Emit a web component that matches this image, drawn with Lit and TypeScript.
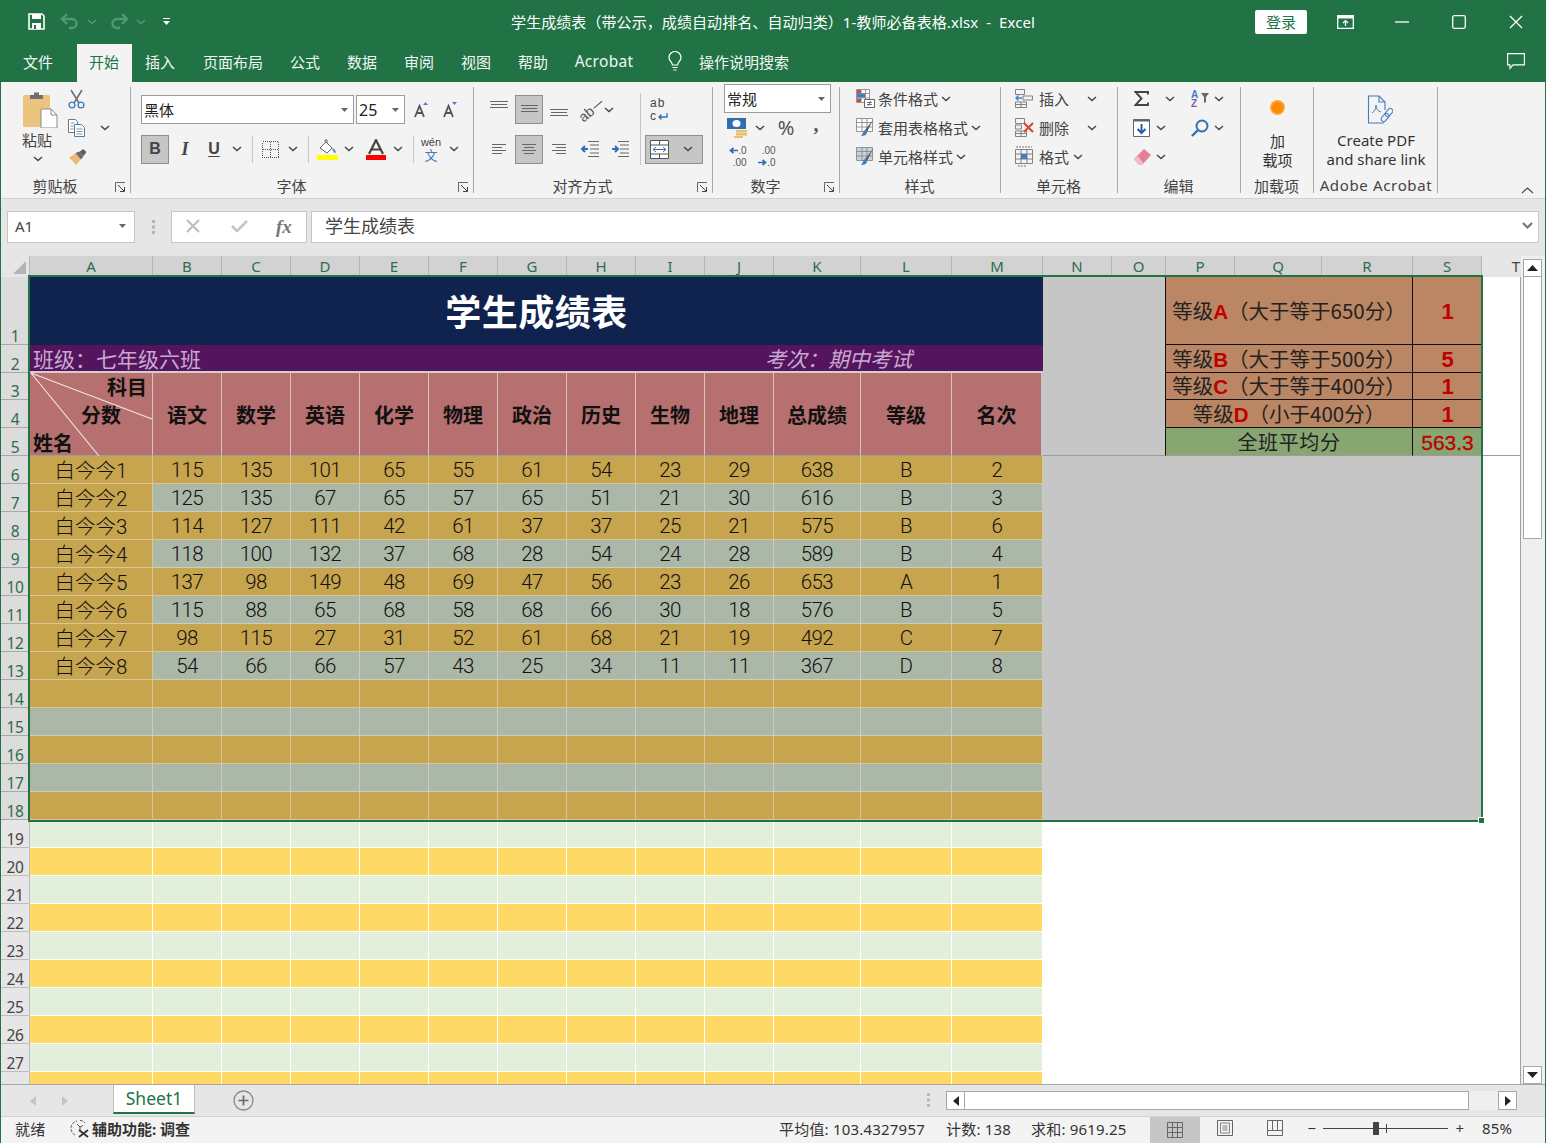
import { LitElement, html, css } from 'lit';
import { customElement } from 'lit/decorators.js';

type Item = [number, unknown, string?];

// every item is centred on its x (or starts at it, with 'l'), x counted from the window's left edge
const row = (x0: number, items: Item[], cls = '') => {
  let prev = x0;
  return html`<div class="row ${cls}">
    ${items.map(([x, t, c]) => {
      const m = x - prev;
      prev = x;
      return html`<span class="it ${c ?? ''}" style="margin-left:${m}px">${t}</span>`;
    })}
  </div>`;
};

const chev = (c = '#444') =>
  html`<svg width="10" height="6" viewBox="0 0 10 6"><path d="M1 1l4 3.6L9 1" fill="none" stroke="${c}" stroke-width="1.4" /></svg>`;
const caret = html`<svg width="7" height="4" viewBox="0 0 7 4"><path d="M0 0h7L3.500 4z" fill="#666" /></svg>`;
const launcher = html`<svg class="launch" width="11" height="11" viewBox="0 0 11 11"><path d="M.5 10V.5H10" fill="none" stroke="#666" /><path d="M3 3l6 6M9.5 5v4.500H5" fill="none" stroke="#444" /></svg>`;

const icons = {
  save: html`<svg width="17" height="17" viewBox="0 0 17 17"><path d="M1 1h13l2 2v13H1z" fill="none" stroke="#fff" stroke-width="1.6" /><path d="M4 1h9v5H4z" fill="#fff" /><path d="M4 10h9v6H4z" fill="#fff" /><path d="M6 12h2v4H6z" fill="#217346" /></svg>`,
  undo: html`<svg width="20" height="17" viewBox="0 0 20 17"><path d="M7 1L2 6l5 5M2 6h10a4.500 4.500 0 0 1 0 9H9" fill="none" stroke="#4f9a72" stroke-width="2.400" /></svg>`,
  redo: html`<svg width="20" height="17" viewBox="0 0 20 17"><path d="M13 1l5 5-5 5M18 6H8a4.500 4.500 0 0 0 0 9h3" fill="none" stroke="#4f9a72" stroke-width="2.400" /></svg>`,
  custom: html`<svg width="7" height="8" viewBox="0 0 7 8"><path d="M0 .5h7" stroke="#fff" /><path d="M0 3h7L3.500 7z" fill="#fff" /></svg>`,
  ribbonMode: html`<svg width="17" height="14" viewBox="0 0 17 14"><path d="M.7.7h15.600v12.600H.7z" fill="none" stroke="#fff" stroke-width="1.300" /><path d="M.7 1h15.600v2.500H.7z" fill="#fff" /><path d="M8.500 11V6M6 8l2.500-2.500L11 8" fill="none" stroke="#fff" stroke-width="1.200" /></svg>`,
  min: html`<svg width="14" height="2" viewBox="0 0 14 2"><path d="M0 1h14" stroke="#fff" stroke-width="1.300" /></svg>`,
  max: html`<svg width="14" height="14" viewBox="0 0 14 14"><rect x=".7" y=".7" width="12.600" height="12.600" rx="1.500" fill="none" stroke="#fff" stroke-width="1.300" /></svg>`,
  close: html`<svg width="14" height="14" viewBox="0 0 14 14"><path d="M1 1l12 12M13 1L1 13" stroke="#fff" stroke-width="1.300" /></svg>`,
  bulb: html`<svg width="14" height="21" viewBox="0 0 14 21"><path d="M4.500 14c0-3-3.500-4-3.500-7.500a6 6 0 0 1 12 0C13 10 9.500 11 9.500 14z" fill="none" stroke="#fff" stroke-width="1.200" /><path d="M4.500 16.500h5M5.500 19h3" stroke="#fff" stroke-width="1.200" /></svg>`,
  comment: html`<svg width="18" height="17" viewBox="0 0 18 17"><path d="M.6.6h16.800v11.300H6l-3 3.500v-3.500H.6z" fill="none" stroke="#fff" stroke-width="1.100" /></svg>`,
  paste: html`<svg width="37" height="37" viewBox="0 0 37 37"><rect x="2" y="4" width="27" height="32" rx="1.500" fill="#edc47e" /><path d="M9 4h4V1.500h5V4h4v4H9z" fill="#6f6f6f" /><path d="M20 18h10l6 6v13H20z" fill="#fff" stroke="#8c8c8c" /><path d="M30 18v6h6" fill="none" stroke="#8c8c8c" /></svg>`,
  cut: html`<svg width="17" height="20" viewBox="0 0 17 20"><path d="M3 1l8 13M14 1L6 14" stroke="#6d6d6d" stroke-width="1.500" /><circle cx="4" cy="16" r="2.900" fill="none" stroke="#3f7cc0" stroke-width="1.400" /><circle cx="13" cy="16" r="2.900" fill="none" stroke="#3f7cc0" stroke-width="1.400" /></svg>`,
  copy: html`<svg width="17" height="18" viewBox="0 0 17 18"><path d="M.5.500h7l2 2v11H.5z" fill="#fff" stroke="#777" /><path d="M6.500 5.500h7l3 3v9h-10z" fill="#fff" stroke="#4a7ebb" /><path d="M2.500 4h4M2.500 7h3M2.500 10h3M8.500 10h6M8.500 12.500h6M8.500 15h6" stroke="#777" stroke-width=".8" /></svg>`,
  brush: html`<svg width="18" height="16" viewBox="0 0 18 16"><path d="M0 9l7-5 5 6-5 6C5 13 3 11 0 9z" fill="#e9b872" /><path d="M6.500 4l5.500 6.500 2.500-3-4-5z" fill="#6a6a6a" /><path d="M10.500 3L14 0l3.500 3-3 4z" fill="#5c5c5c" /></svg>`,
  fontUp: html`<svg width="15" height="16" viewBox="0 0 15 16"><path d="M1 15L5.500 4 10 15M2.700 11h5.600" fill="none" stroke="#555" stroke-width="1.800" /><path d="M9 3l2.500-3L14 3z" fill="#4a7ebb" /></svg>`,
  fontDown: html`<svg width="15" height="16" viewBox="0 0 15 16"><path d="M1 15L5.500 4 10 15M2.700 11h5.600" fill="none" stroke="#555" stroke-width="1.800" /><path d="M9 0h5l-2.500 3z" fill="#4a7ebb" /></svg>`,
  border: html`<svg width="17" height="17" viewBox="0 0 17 17" shape-rendering="crispEdges"><path d="M.5.500h16v16H.5zM8.500.500v16M.5 8.500h16" fill="none" stroke="#555" stroke-dasharray="1 1" /></svg>`,
  fill: html`<svg width="21" height="21" viewBox="0 0 21 21"><path d="M3 9l6-6 6 6-5 5z" fill="#fff" stroke="#666" /><path d="M8 3V1h2v3" fill="none" stroke="#666" /><path d="M15 9c3 1 4 3 3.500 5-1.500 0-2.500-2-3.500-5z" fill="#4a7ebb" /><path d="M0 16h21v5H0z" fill="#ffff00" /></svg>`,
  color: html`<svg width="20" height="21" viewBox="0 0 20 21"><path d="M3 15L10 1l7 14M5.500 10.500h9" fill="none" stroke="#444" stroke-width="2.200" /><path d="M0 16h20v5H0z" fill="#ff0000" /></svg>`,
  brushCell: (c: string) => html`<svg width="19" height="19" viewBox="0 0 19 19"><path d="M.5.500h16v13H.5zM.5 4.500h16M.5 9h16M6 .5v13M11 .5v13" fill="${c}" stroke="#8a8a8a" stroke-width=".9" /><path d="M17 2L9 12l2 2z" fill="#5c5c5c" /><path d="M9 12c-2 1-1.500 3-4 6 3 0 6-1 6-4z" fill="#3f7cc0" /></svg>`,
  cond: html`<svg width="19" height="19" viewBox="0 0 19 19"><path d="M.5.500h13v13H.5zM.5 4.500h13M.5 9h13M5 .5v13M9.500.5v13" fill="#fff" stroke="#8a8a8a" stroke-width=".9" /><path d="M1 1h4v3.500H1z" fill="#c0504d" /><path d="M1 5h8v3.500H1z" fill="#3f7cc0" /><path d="M1 9.500h4V13H1z" fill="#c0504d" /><path d="M8.500 10.500h10v8h-10z" fill="#fff" stroke="#666" /><path d="M11 13.500h5M11 15.500h5M14.500 12l-2 5" stroke="#555" stroke-width=".8" /></svg>`,
  insert: html`<svg width="18" height="19" viewBox="0 0 18 19"><path d="M.5.500h9v5h-9zM.5 13h11v5.500H.5zM6 13v5.500M.5 15.500h11M8 7h9.500v4H8z" fill="none" stroke="#777" stroke-width=".9" /><path d="M7 9H1M3.500 6.500L1 9l2.500 2.500" fill="none" stroke="#3f7cc0" stroke-width="1.300" /></svg>`,
  del: html`<svg width="20" height="19" viewBox="0 0 20 19"><path d="M.5.500h9v5h-9zM.5 13h11v5.500H.5zM6 13v5.500M.5 15.500h11M.5 7h6v4h-6z" fill="none" stroke="#777" stroke-width=".9" /><path d="M9 5l9 9M18 5l-9 9" stroke="#d9432f" stroke-width="2" /></svg>`,
  format: html`<svg width="18" height="21" viewBox="0 0 18 21"><path d="M.5 3.500h17v14H.5zM.5 8h17M.5 13h17M6 3.500v14M12 3.500v14" fill="none" stroke="#777" stroke-width=".9" /><path d="M6 8h6v5H6z" fill="#3f7cc0" /><path d="M1 1h16M3 20h8" stroke="#777" stroke-dasharray="2 1" /></svg>`,
  sigma: html`<svg width="15" height="15" viewBox="0 0 15 15"><path d="M14 3.500V1H1.500l6 6.500-6 6.500H14v-2.500" fill="none" stroke="#444" stroke-width="1.900" /></svg>`,
  sort: html`<svg width="19" height="17" viewBox="0 0 19 17"><text x="0" y="7.500" class="sa">A</text><text x="0" y="16.500" class="sz">Z</text><path d="M10 3h8l-3 4v5l-2 1V7z" fill="#666" /></svg>`,
  down: html`<svg width="17" height="18" viewBox="0 0 17 18"><path d="M.5.500h16v17H.5z" fill="#fff" stroke="#666" /><path d="M.5.500h16v2H.5z" fill="#666" /><path d="M8.500 5v9M4.500 10l4 4 4-4" fill="none" stroke="#1f62a8" stroke-width="2" /></svg>`,
  find: html`<svg width="18" height="18" viewBox="0 0 18 18"><circle cx="11" cy="7" r="5.500" fill="none" stroke="#2f6fb0" stroke-width="1.900" /><path d="M7 11l-6 6" stroke="#2f6fb0" stroke-width="2.400" /></svg>`,
  erase: html`<svg width="17" height="17" viewBox="0 0 17 17"><path d="M0 11L10 1l7 6-9 10H5z" fill="#e47f95" /><path d="M0 11l5 6h3l1.500-1.500L4 8z" fill="#f2bcc8" /></svg>`,
  pdf: html`<svg width="26" height="30" viewBox="0 0 26 30"><path d="M17 28H1.500V1H12l6 6v8" fill="none" stroke="#3f7cc0" stroke-width="1.100" /><path d="M12 1v6h6" fill="none" stroke="#3f7cc0" stroke-width="1.100" /><path d="M5 18c3-2 4-5 4-8 0 4 2 6 5 7" fill="none" stroke="#3f7cc0" /><rect x="13.500" y="20" width="9" height="5" rx="2.500" transform="rotate(-50 18 22.500)" fill="none" stroke="#3f7cc0" /><rect x="17.500" y="15" width="9" height="5" rx="2.500" transform="rotate(-50 22 17.500)" fill="none" stroke="#3f7cc0" /></svg>`,
  alignV: (top: number, w = 17) => html`<svg width="${w}" height="17" viewBox="0 0 ${w} 17"><path d="M0 ${top}.5h${w}M1 ${top + 3}.5h${w - 2}M0 ${top + 6}.5h${w}" stroke="#666" /></svg>`,
  alignH: (k: 'l' | 'c' | 'r') => {
    const d = { l: 'M0 2.500h14M0 5.500h10M0 8.500h14M0 11.500h10', c: 'M0 2.500h14M2 5.500h10M0 8.500h14M2 11.500h10', r: 'M0 2.500h14M4 5.500h10M0 8.500h14M4 11.500h10' }[k];
    return html`<svg width="14" height="14" viewBox="0 0 14 14"><path d="${d}" stroke="#666" /></svg>`;
  },
  outdent: html`<svg width="18" height="16" viewBox="0 0 18 16"><path d="M7 .5h11M9 4h9M9 8h9M9 12h9M7 15.500h11" stroke="#666" /><path d="M7 8H1M4 5L1 8l3 3" fill="none" stroke="#2f6fb0" stroke-width="2" /></svg>`,
  indent: html`<svg width="18" height="16" viewBox="0 0 18 16"><path d="M7 .5h11M9 4h9M9 8h9M9 12h9M7 15.500h11" stroke="#666" /><path d="M1 8h6M4 5l3 3-3 3" fill="none" stroke="#2f6fb0" stroke-width="2" /></svg>`,
  merge: html`<svg width="19" height="19" viewBox="0 0 19 19"><path d="M.5.500h18v18H.5zM.5 5h18M.5 14h18M9.500.5V5M9.500 14v4.500" fill="#fff" stroke="#555" /><path d="M3 9.500h13M6 7L3 9.500 6 12M13 7l3 2.500L13 12" fill="none" stroke="#2f6fb0" /></svg>`,
  currency: html`<svg width="21" height="20" viewBox="0 0 21 20"><path d="M0 0h19v11H0z" fill="#2f6fb0" /><ellipse cx="9.500" cy="5.500" rx="4" ry="3.500" fill="#fff" /><path d="M9 12h11v2.500H9zM9 15h11v2.500H9zM7 18h9v2H7z" fill="#eebd6a" /></svg>`,
  incDec: (inc: boolean) => inc
    ? html`<span class="dec"><span class="dr"><svg width="9" height="7" viewBox="0 0 9 7"><path d="M9 3.500H2M4.500 1L1.500 3.500l3 2.500" fill="none" stroke="#2f6fb0" stroke-width="1.700" /></svg>.0</span><span>.00</span></span>`
    : html`<span class="dec"><span>.00</span><span class="dr"><svg width="9" height="7" viewBox="0 0 9 7"><path d="M0 3.500h7M4.500 1l3 2.500-3 2.500" fill="none" stroke="#2f6fb0" stroke-width="1.700" /></svg>.0</span></span>`,
  x: html`<svg width="14" height="14" viewBox="0 0 14 14"><path d="M1 1l12 12M13 1L1 13" stroke="#bdbdbd" stroke-width="2" /></svg>`,
  check: html`<svg width="17" height="13" viewBox="0 0 17 13"><path d="M1 6l5 5L16 1" fill="none" stroke="#c4c4c4" stroke-width="2.600" /></svg>`,
  fchev: html`<svg width="11" height="7" viewBox="0 0 11 7"><path d="M1 1l4.500 4.500L10 1" fill="none" stroke="#777" stroke-width="2.200" /></svg>`,
  triLeft: (c: string) => html`<svg width="6" height="10" viewBox="0 0 6 10"><path d="M6 0v10L0 5z" fill="${c}" /></svg>`,
  triRight: (c: string) => html`<svg width="6" height="10" viewBox="0 0 6 10"><path d="M0 0v10l6-5z" fill="${c}" /></svg>`,
  triUp: html`<svg width="11" height="6" viewBox="0 0 11 6"><path d="M0 6l5.500-6L11 6z" fill="#222" /></svg>`,
  triDown: html`<svg width="11" height="6" viewBox="0 0 11 6"><path d="M0 0l5.500 6L11 0z" fill="#222" /></svg>`,
  add: html`<svg width="21" height="21" viewBox="0 0 21 21"><circle cx="10.500" cy="10.500" r="9.500" fill="none" stroke="#8a8a8a" stroke-width="1.300" /><path d="M10.500 5.500v10M5.500 10.500h10" stroke="#6a6a6a" stroke-width="1.700" /></svg>`,
  dots: html`<svg width="3" height="14" viewBox="0 0 3 14"><path d="M0 0h3v3H0zM0 5.500h3v3H0zM0 11h3v3H0z" fill="#b4b4b4" /></svg>`,
  a11y: html`<svg width="20" height="20" viewBox="0 0 20 20"><path d="M5 17A7.500 7.500 0 0 1 7 3M10 2.500c2 0 4 1 5 2.500" fill="none" stroke="#555" stroke-dasharray="3 1.200" /><path d="M7 6l3 3 3-1.500M10 9v3" fill="none" stroke="#555" /><path d="M9 12l9 7M18 12l-9 7" stroke="#333" stroke-width="1.800" /></svg>`,
  viewNormal: html`<svg width="16" height="16" viewBox="0 0 16 16"><path d="M.5.500h15v15H.5zM.5 5.500h15M.5 10.500h15M5.500.5v15M10.500.5v15" fill="none" stroke="#666" /></svg>`,
  viewPage: html`<svg width="16" height="16" viewBox="0 0 16 16"><path d="M.5.500h15v15H.5z" fill="none" stroke="#666" /><path d="M3.500 3h9v10h-9zM5.500 6h5M5.500 8h5M5.500 10h5" fill="none" stroke="#666" stroke-width=".8" /></svg>`,
  viewBreak: html`<svg width="16" height="16" viewBox="0 0 16 16"><path d="M.5.500h15v15H.5zM.5 10.500h15M5.500.5v10M10.500.5v10" fill="none" stroke="#666" /></svg>`,
};

const colLetters = 'ABCDEFGHIJKLMNOPQRS'.split('');
const subjects = ['语文', '数学', '英语', '化学', '物理', '政治', '历史', '生物', '地理', '总成绩', '等级', '名次'];
const scores: (string | number)[][] = [
  ['白今今1', 115, 135, 101, 65, 55, 61, 54, 23, 29, 638, 'B', 2],
  ['白今今2', 125, 135, 67, 65, 57, 65, 51, 21, 30, 616, 'B', 3],
  ['白今今3', 114, 127, 111, 42, 61, 37, 37, 25, 21, 575, 'B', 6],
  ['白今今4', 118, 100, 132, 37, 68, 28, 54, 24, 28, 589, 'B', 4],
  ['白今今5', 137, 98, 149, 48, 69, 47, 56, 23, 26, 653, 'A', 1],
  ['白今今6', 115, 88, 65, 68, 58, 68, 66, 30, 18, 576, 'B', 5],
  ['白今今7', 98, 115, 27, 31, 52, 61, 68, 21, 19, 492, 'C', 7],
  ['白今今8', 54, 66, 66, 57, 43, 25, 34, 11, 11, 367, 'D', 8],
];
const grades: [string, string, number][] = [
  ['A', '（大于等于650分）', 1],
  ['B', '（大于等于500分）', 5],
  ['C', '（大于等于400分）', 1],
  ['D', '（小于400分）', 1],
];

@customElement('app-root')
export class AppRoot extends LitElement {
  static styles = css`
    :host {
      display: block;
      width: 1546px;
      height: 1143px;
      overflow: hidden;
      font-family: "Noto Sans", "Noto Sans CJK SC", sans-serif;
      color: #444;
    }
    .win {
      box-sizing: border-box;
      width: 1546px;
      height: 1143px;
      border: 1px solid #217346;
      border-top: 0;
      display: flex;
      flex-direction: column;
      background: #e6e6e6;
    }
    .row { display: flex; align-items: center; }
    .it { width: 0; flex: none; display: flex; justify-content: center; align-items: center; white-space: nowrap; }
    .it.l { justify-content: flex-start; }
    .it > * { flex: none; }

    .titlebar { height: 44px; background: #217346; color: #fff; font-size: 15px; letter-spacing: 0.080px; flex: none; }
    .titlebar .row { height: 43px; }
    .login { width: 52px; height: 24px; background: #fff; color: #217346; border-radius: 2px; display: flex; align-items: center; justify-content: center; }
    .tabs { height: 38px; background: #217346; color: #f1f8f4; font-size: 15px; flex: none; }
    .tabs .row { height: 34px; }
    .tab-on { box-sizing: border-box; width: 55px; height: 38px; margin-top: 4px; padding-bottom: 4px; background: #f3f3f3; color: #217346; display: flex; align-items: center; justify-content: center; }
    .latin { font-size: 15.500px; letter-spacing: 0.300px; }

    .ribbon { height: 116px; flex: none; display: flex; background: #f3f3f3; border-bottom: 1px solid #d2d2d2; font-size: 15px; }
    .group { position: relative; flex: none; height: 116px; display: flex; flex-direction: column; box-sizing: border-box; }
    .group.sep::after { content: ""; position: absolute; right: 0; top: 5px; bottom: 5px; width: 1px; background: #a9a9a9; }
    .group.rest { flex: 1; }
    .body { flex: 1; }
    .clip { display: flex; }
    .pastecol { width: 76px; flex: none; display: flex; flex-direction: column; align-items: center; padding-top: 9px; }
    .pastecol .t { line-height: 20px; margin: 2px 4px 0 0; }
    .pastecol svg:last-child { margin: 6px 3px 0 0; }
    .r3 { padding-top: 2px; }
    .r3 .row { height: 29px; }
    .r2 { padding-top: 8px; }
    .r2 .row { height: 39.500px; }
    .label { height: 20px; margin-bottom: 3px; padding-right: 2px; display: flex; justify-content: center; align-items: center; white-space: nowrap; }
    .label.pad { padding-right: 22px; }
    .label.spaced { letter-spacing: 0.650px; padding-right: 0; }
    .launch { position: absolute; right: 5px; bottom: 5px; }
    .sel { box-sizing: border-box; height: 29px; background: #fff; border: 1px solid #9c9c9c; display: flex; align-items: center; justify-content: space-between; padding: 0 5px 0 2px; color: #222; }
    .sel.w213 { width: 213px; }
    .sel.w49 { width: 49px; font-size: 16px; }
    .sel.w107 { width: 107px; }
    .press { box-sizing: border-box; width: 28px; height: 29px; background: #c6c6c6; border: 1px solid #8f8f8f; display: flex; align-items: center; justify-content: center; }
    .press.wide { width: 58px; justify-content: flex-start; gap: 14px; padding-left: 4px; }
    .bold-b { font-family: "Liberation Sans", sans-serif; font-weight: 700; font-size: 16px; color: #444; }
    .ital { font-family: "Liberation Serif", serif; font-style: italic; font-weight: 700; font-size: 18px; color: #444; }
    .under { font-family: "Liberation Sans", sans-serif; font-weight: 700; font-size: 16px; color: #444; text-decoration: underline; text-underline-offset: 2px; }
    .vsep { display: block; width: 1px; height: 27px; background: #c6c6c6; }
    .vsep.tall { height: 72px; margin-top: 38px; }
    .wen { display: flex; flex-direction: column; align-items: center; font: 11px/11px "Liberation Sans", sans-serif; color: #444; }
    .wen b { font: 13px/13px "Noto Sans CJK SC", sans-serif; color: #3f7cc0; }
    .orient { display: flex; align-items: center; transform: rotate(-40deg); font: 14px/14px "Liberation Sans", sans-serif; color: #555; }
    .orient i { display: block; width: 11px; height: 1px; background: #555; margin-left: 1px; }
    .wrap { display: flex; flex-direction: column; font: 12px/12.500px "Liberation Sans", sans-serif; color: #444; letter-spacing: 1px; }
    .wrap svg { vertical-align: -1px; }
    .pct { font-size: 20px; color: #555; }
    .comma { font-family: "Liberation Serif", serif; font-weight: 700; font-size: 20px; color: #555; margin-top: -6px; }
    .dec { display: flex; flex-direction: column; align-items: flex-end; font: 10px/11.500px "Liberation Sans", sans-serif; color: #555; }
    .dr { display: flex; align-items: center; }
    .sa { font: 700 10px "Liberation Sans", sans-serif; fill: #3f7cc0; }
    .sz { font: 700 10px "Liberation Sans", sans-serif; fill: #7b5db0; }
    .dot { display: block; width: 15px; height: 15px; border-radius: 50%; background: radial-gradient(circle, #ff8a00 45%, #ffb766 75%, #f3f3f3 100%); }
    .stack { display: flex; flex-direction: column; align-items: center; line-height: 19px; color: #333; }
    .top-dot { padding-top: 18px; height: 15px; }
    .top-pdf { padding-top: 13px; height: 30px; }
    .add-text { margin-top: 17px; }
    .pdf-text { margin-top: 6px; }
    .collapse { position: absolute; right: 11px; bottom: 4px; }

    .formula { height: 57px; flex: none; box-sizing: border-box; padding: 12px 6px 0; display: flex; align-items: flex-start; background: #e6e6e6; }
    .namebox { box-sizing: border-box; width: 128px; height: 32px; background: #fff; border: 1px solid #c6c6c6; display: flex; align-items: center; justify-content: space-between; padding: 0 8px 2px 7px; font-size: 15px; }
    .fdots { width: 36px; height: 32px; display: flex; align-items: center; justify-content: center; }
    .fxbox { box-sizing: border-box; width: 136px; height: 32px; background: #fff; border: 1px solid #c6c6c6; display: flex; align-items: center; padding-left: 14px; }
    .fxbox .x { width: 45px; }
    .fxbox .v { width: 45px; }
    .fx { font-family: "Liberation Serif", serif; font-style: italic; font-weight: 700; font-size: 19px; color: #777; }
    .input { box-sizing: border-box; flex: 1; height: 32px; margin-left: 4px; background: #fff; border: 1px solid #c6c6c6; display: flex; align-items: center; justify-content: space-between; padding: 0 5px 4px 13px; font-size: 18px; color: #444; }

    .main { flex: none; height: 828px; display: flex; background: #e6e6e6; }
    .sheet {
      position: relative;
      width: 1520px;
      height: 828px;
      overflow: hidden;
      display: grid;
      grid-template-columns: 29px 123px repeat(9, 69px) 87px 91px 91px 69px 54px 69px 87px 91px 69px 39px;
      grid-template-rows: 21px 68px 28px 27px;
      grid-auto-rows: 28px;
      background: #fff;
      font-family: "Liberation Sans", "Noto Sans CJK SC", sans-serif;
    }
    .corner { background: #e6e6e6; position: relative; border-right: 1px solid #b5b5b5; box-sizing: border-box; }
    .corner svg { position: absolute; right: 3px; bottom: 3px; }
    .ch { box-sizing: border-box; background: #d2d2d2; border-right: 1px solid #b4b4b4; color: #2f6b4f; font: 15px/21px "Noto Sans", sans-serif; display: flex; justify-content: center; }
    .ch.t { background: #e6e6e6; color: #444; border: 0; justify-content: flex-end; padding-right: 1px; }
    .rh { box-sizing: border-box; background: #dcdcdc; border-bottom: 1px solid #a8a8a8; border-right: 1px solid #2f6b4f; color: #2f6b4f; font: 15.500px/15px "Noto Sans", sans-serif; letter-spacing: -0.300px; display: flex; justify-content: center; align-items: flex-end; }
    .rh.off { background: #e6e6e6; color: #444; border-bottom-color: #bdbdbd; border-right-color: #bdbdbd; }
    .c { box-sizing: border-box; display: flex; align-items: center; justify-content: center; font-family: Roboto, "Noto Sans CJK SC", sans-serif; font-weight: 300; font-size: 20.500px; color: #111; padding-top: 1px; white-space: nowrap; letter-spacing: -0.600px; }
    .c.name { letter-spacing: 0; padding: 0 0 1px; }
    .gold { background: #c7a44e; border-right: 1px solid #d9c79a; border-bottom: 1px solid #d9c79a; }
    .ash { background: #abb8a8; border-right: 1px solid #c6cfc2; border-bottom: 1px solid #c6cfc2; }
    .mint { background: #e2efda; border-right: 1px solid #fff; border-bottom: 1px solid #fff; }
    .sun { background: #ffd966; border-right: 1px solid #fff; border-bottom: 1px solid #fff; }
    .title { grid-column: span 13; background: #10234f; color: #fff; font-size: 36px; font-weight: 700; letter-spacing: 0.500px; display: flex; align-items: center; justify-content: center; font-family: "Noto Sans CJK SC", sans-serif; padding-bottom: 2px; box-sizing: border-box; }
    .klass { grid-column: span 13; background: #55145e; border-bottom: 2px solid #d0d0d0; color: #c9a9d0; font-size: 21px; display: flex; align-items: center; justify-content: space-between; padding: 0 131px 0 3px; box-sizing: border-box; font-family: "Noto Sans CJK SC", sans-serif; }
    .klass em { font-style: italic; }
    .side { grid-column: span 2; grid-row: span 5; background: #c6c6c6; border-bottom: 1px solid #9c9c9c; box-sizing: border-box; }
    .tcol { box-sizing: border-box; background: #fff; border-right: 1px solid #a0a0a0; }
    .tcol.top { grid-row: span 5; border-bottom: 1px solid #9c9c9c; }
    .tcol.mid { grid-row: span 13; }
    .band { grid-column: span 6; grid-row: span 13; background: #c6c6c6; }
    .clear { grid-column: span 7; grid-row: span 10; background: #fff; position: relative; }
    .clear i { position: absolute; right: 0; top: 0; bottom: 0; width: 1px; background: #a0a0a0; }
    .hd { box-sizing: border-box; grid-row: span 3; background: #b5706f; border-right: 1px solid #dcc1c0; color: #111; font-size: 20px; font-weight: 700; display: flex; align-items: center; justify-content: center; border-bottom: 1px solid #9c9c9c; font-family: "Noto Sans CJK SC", sans-serif; }
    .hd.end { border-right: 2px solid #c6c6c6; }
    .hd.diag { position: relative; flex-direction: column; align-items: stretch; justify-content: flex-start; line-height: 28px; }
    .hd.diag svg { position: absolute; left: 0; top: 0; }
    .hd.diag span { display: block; height: 28px; }
    .d1 { text-align: right; padding-right: 5px; }
    .d2 { padding-left: 51px; }
    .d3 { padding-left: 3px; }
    .gr { box-sizing: border-box; grid-column: span 3; margin-left: -1px; background: #ba8663; border-left: 1px solid #111; border-right: 1px solid #111; border-bottom: 1px solid #111; display: flex; align-items: center; justify-content: center; color: #222; font-size: 20.500px; font-family: "Noto Sans CJK SC", sans-serif; padding-bottom: 2px; }
    .gr b { color: #c00000; font: 700 20.500px "Liberation Sans", sans-serif; }
    .gv { box-sizing: border-box; background: #ba8663; border-bottom: 1px solid #111; display: flex; align-items: center; justify-content: center; color: #c00000; font-weight: 700; font-size: 22px; padding-top: 2px; }
    .gr.avg { background: #87a672; border-bottom: 1px solid #9c9c9c; font-size: 20px; letter-spacing: 0.600px; padding-bottom: 0; }
    .gv.avg { background: #87a672; border-bottom: 1px solid #9c9c9c; font-size: 21px; font-weight: 400; -webkit-text-stroke: 0.300px #c00000; }
    .pick { position: absolute; left: 27px; top: 19px; width: 1455px; height: 547px; box-sizing: border-box; border: 2px solid #217346; pointer-events: none; }
    .pick i { position: absolute; right: -4px; bottom: -4px; width: 5px; height: 5px; background: #217346; border: 1px solid #fff; }

    .vbar { flex: 1; box-sizing: border-box; padding: 3px 3px 0 2px; display: flex; flex-direction: column; background: #efefef; }
    .vbtn { box-sizing: border-box; height: 18px; background: #fff; border: 1px solid #a6a6a6; display: flex; align-items: center; justify-content: center; flex: none; }
    .vthumb { box-sizing: border-box; height: 262px; background: #fff; border: 1px solid #a6a6a6; border-top: 0; flex: none; }
    .vtrack { flex: 1; }

    .sheetbar { height: 32px; flex: none; box-sizing: border-box; border-top: 1px solid #a6a6a6; background: #e6e6e6; }
    .sheetbar .row { height: 30px; }
    .sheetbar .it { height: 30px; }
    .tabcell { box-sizing: border-box; width: 82px; height: 29px; padding-bottom: 2px; background: #fff; border-left: 1px solid #bdbdbd; border-right: 1px solid #bdbdbd; border-bottom: 2px solid #217346; color: #217346; font: 17.500px "Noto Sans", sans-serif; display: flex; align-items: center; justify-content: center; align-self: flex-start; }
    .hscroll { box-sizing: border-box; width: 571px; height: 19px; display: flex; align-self: flex-start; margin-top: 6px; }
    .hb { box-sizing: border-box; width: 19px; height: 19px; background: #fff; border: 1px solid #a6a6a6; display: flex; align-items: center; justify-content: center; flex: none; }
    .hthumb { box-sizing: border-box; width: 504px; height: 19px; background: #fff; border: 1px solid #a6a6a6; border-left: 0; flex: none; }
    .htrack { flex: 1; background: #efefef; }
    .status { flex: 1; background: #f3f3f3; border-top: 1px solid #d2d2d2; font-size: 15px; letter-spacing: 0.200px; color: #333; }
    .status .row { height: 26px; }
    .status .it { height: 26px; box-sizing: border-box; padding-bottom: 4px; }
    .a11y { font-weight: 700; font-size: 15px; letter-spacing: 0; }
    .viewon { width: 50px; height: 26px; background: #c6c6c6; display: flex; align-items: center; justify-content: center; margin-bottom: -4px; }
    .slider { display: block; width: 125px; height: 1px; background: #444; position: relative; }
    .slider i { position: absolute; left: 50px; top: -6px; width: 6px; height: 13px; background: #444; }
    .slider b { position: absolute; left: 63px; top: -4px; width: 1px; height: 9px; background: #444; }
  `;

  private group(x: number, w: number, label: unknown, hasLaunch: boolean, body: unknown, labelCls = '') {
    return html`<div class="group ${x < 1400 ? 'sep' : ''}" style="width:${w}px">
      <div class="body">${body}</div>
      <div class="label ${hasLaunch ? 'pad' : ''} ${labelCls}">${label}</div>
      ${hasLaunch ? launcher : ''}
    </div>`;
  }

  private renderRibbon() {
    const c = chev();
    return html`<div class="ribbon">
      ${this.group(1, 130, '剪贴板', true, html`
        <div class="clip">
          <div class="pastecol">${icons.paste}<span class="t">粘贴</span>${chev()}</div>
          <div class="r3">
            ${row(77, [[76, icons.cut]])}
            ${row(77, [[76, icons.copy], [105, c]])}
            ${row(77, [[78, icons.brush]])}
          </div>
        </div>`)}
      ${this.group(131, 343, '字体', true, html`
        <div class="r2">
          ${row(131, [
            [247.500, html`<span class="sel w213">黑体${caret}</span>`],
            [380.500, html`<span class="sel w49">25${caret}</span>`],
            [421.500, icons.fontUp],
            [450, icons.fontDown],
          ])}
          ${row(131, [
            [155, html`<span class="press"><span class="bold-b">B</span></span>`],
            [185, html`<span class="ital">I</span>`],
            [214, html`<span class="under">U</span>`],
            [237, c],
            [252.500, html`<i class="vsep"></i>`],
            [270, icons.border],
            [293, c],
            [308.500, html`<i class="vsep"></i>`],
            [327, icons.fill],
            [349, c],
            [376, icons.color],
            [398, c],
            [413.500, html`<i class="vsep"></i>`],
            [431, html`<span class="wen">wén<b>文</b></span>`],
            [454, c],
          ])}
        </div>`)}
      ${this.group(474, 239, '对齐方式', true, html`
        <div class="r2">
          ${row(474, [
            [499, icons.alignV(0, 18)],
            [529, html`<span class="press">${icons.alignV(4)}</span>`],
            [559, icons.alignV(8, 18)],
            [591, html`<span class="orient">ab<i></i></span>`],
            [609, c],
            [640.500, html`<i class="vsep tall"></i>`],
            [659, html`<span class="wrap"><span>ab</span><span>c<svg width="11" height="8" viewBox="0 0 11 8"><path d="M10 0v4H2M4.500 1.500L2 4l2.500 2.500" fill="none" stroke="#2f6fb0" stroke-width="1.300" /></svg></span></span>`],
          ])}
          ${row(474, [
            [499, icons.alignH('l')],
            [529, html`<span class="press">${icons.alignH('c')}</span>`],
            [559, icons.alignH('r')],
            [590, icons.outdent],
            [620, icons.indent],
            [674, html`<span class="press wide">${icons.merge}${c}</span>`],
          ])}
        </div>`)}
      ${this.group(713, 127, '数字', true, html`
        <div class="r3">
          ${row(713, [[777.500, html`<span class="sel w107">常规${caret}</span>`]])}
          ${row(713, [
            [737, icons.currency],
            [760, c],
            [786, html`<span class="pct">%</span>`],
            [816, html`<span class="comma">,</span>`],
          ])}
          ${row(713, [[738, icons.incDec(true)], [767, icons.incDec(false)]])}
        </div>`)}
      ${this.group(840, 161, '样式', false, html`
        <div class="r3">
          ${row(840, [[865, icons.cond], [878, '条件格式', 'l'], [946, c]])}
          ${row(840, [[865, icons.brushCell('#fff')], [878, '套用表格格式', 'l'], [976, c]])}
          ${row(840, [[865, icons.brushCell('#c9d2e0')], [878, '单元格样式', 'l'], [961, c]])}
        </div>`)}
      ${this.group(1001, 117, '单元格', false, html`
        <div class="r3">
          ${row(1001, [[1024, icons.insert], [1039, '插入', 'l'], [1092, c]])}
          ${row(1001, [[1025, icons.del], [1039, '删除', 'l'], [1092, c]])}
          ${row(1001, [[1024, icons.format], [1039, '格式', 'l'], [1078, c]])}
        </div>`)}
      ${this.group(1118, 123, '编辑', false, html`
        <div class="r3">
          ${row(1118, [[1141, icons.sigma], [1170, c], [1200, icons.sort], [1219, c]])}
          ${row(1118, [[1141, icons.down], [1161, c], [1200, icons.find], [1219, c]])}
          ${row(1118, [[1142, icons.erase], [1161, c]])}
        </div>`)}
      ${this.group(1241, 73, '加载项', false, html`
        <div class="top-dot">${row(1241, [[1277, html`<i class="dot"></i>`]])}</div>
        <div class="stack add-text">加<span>载项</span></div>`)}
      ${this.group(1314, 124, 'Adobe Acrobat', false, html`
        <div class="top-pdf">${row(1314, [[1380, icons.pdf]])}</div>
        <div class="stack pdf-text">Create PDF<span>and share link</span></div>`, 'spaced')}
      <div class="group rest">
        <svg class="collapse" width="13" height="7" viewBox="0 0 13 7"><path d="M1 6l5.500-5L12 6" fill="none" stroke="#444" stroke-width="1.100" /></svg>
      </div>
    </div>`;
  }

  private renderSheet() {
    // row 28 only peeks out above the tab bar, its number is below the fold
    const rowHead = (n: number) => html`<div class="rh ${n > 18 ? 'off' : ''}">${n < 28 ? n : ''}</div>`;
    const blank = (cls: string) => Array.from({ length: 13 }, () => html`<div class="c ${cls}"></div>`);
    const grade = (i: number) => html`
      <div class="gr"><span>等级<b>${grades[i][0]}</b>${grades[i][1]}</span></div>
      <div class="gv">${grades[i][2]}</div>`;
    return html`<div class="sheet">
      <div class="corner"><svg width="13" height="13" viewBox="0 0 13 13"><path d="M13 0v13H0z" fill="#b4b4b4" /></svg></div>
      ${colLetters.map((l) => html`<div class="ch">${l}</div>`)}
      <div class="ch t">T</div>

      ${rowHead(1)}
      <div class="title">学生成绩表</div>
      <div class="side"></div>
      ${grade(0)}
      <div class="tcol top"></div>

      ${rowHead(2)}
      <div class="klass"><span>班级：七年级六班</span><em>考次：期中考试</em></div>
      ${grade(1)}

      ${rowHead(3)}
      <div class="hd diag">
        <svg width="123" height="83" viewBox="0 0 123 83"><path d="M1 0l121 46M1 0l68 83" fill="none" stroke="#f2e4e4" stroke-width="1.100" /></svg>
        <span class="d1">科目</span><span class="d2">分数</span><span class="d3">姓名</span>
      </div>
      ${subjects.map((s, i) => html`<div class="hd ${i === 11 ? 'end' : ''}">${s}</div>`)}
      ${grade(2)}

      ${rowHead(4)}
      ${grade(3)}

      ${rowHead(5)}
      <div class="gr avg">全班平均分</div>
      <div class="gv avg">563.3</div>

      ${scores.map((r, i) => html`
        ${rowHead(i + 6)}
        ${r.map((v, j) => html`<div class="c ${j === 0 ? 'name gold' : i % 2 ? 'ash' : 'gold'}">${v}</div>`)}
        ${i === 0 ? html`<div class="band"></div><div class="tcol mid"></div>` : ''}
      `)}
      ${[14, 15, 16, 17, 18].map((n) => html`${rowHead(n)}${blank(n % 2 ? 'ash' : 'gold')}`)}
      ${Array.from({ length: 10 }, (_, k) => k + 19).map((n) => html`
        ${rowHead(n)}${blank(n % 2 ? 'mint' : 'sun')}
        ${n === 19 ? html`<div class="clear"><i></i></div>` : ''}
      `)}
      <div class="pick"><i></i></div>
    </div>`;
  }

  render() {
    return html`<div class="win">
      <div class="titlebar">
        ${row(1, [
          [36, icons.save],
          [70, icons.undo],
          [92, chev('#4f9a72')],
          [119, icons.redo],
          [141, chev('#4f9a72')],
          [166, icons.custom],
          [773, '学生成绩表（带公示，成绩自动排名、自动归类）1-教师必备表格.xlsx\u00a0\u00a0-\u00a0\u00a0Excel'],
          [1281, html`<span class="login">登录</span>`],
          [1345, icons.ribbonMode],
          [1402, icons.min],
          [1459, icons.max],
          [1516, icons.close],
        ])}
      </div>
      <div class="tabs">
        ${row(1, [
          [38, '文件'],
          [104, html`<span class="tab-on">开始</span>`],
          [160, '插入'],
          [233, '页面布局'],
          [305, '公式'],
          [362, '数据'],
          [419, '审阅'],
          [476, '视图'],
          [533, '帮助'],
          [604, html`<span class="latin">Acrobat</span>`],
          [675, icons.bulb],
          [744, '操作说明搜索'],
          [1516, icons.comment],
        ])}
      </div>
      ${this.renderRibbon()}
      <div class="formula">
        <div class="namebox">A1${caret}</div>
        <div class="fdots">${icons.dots}</div>
        <div class="fxbox"><span class="x">${icons.x}</span><span class="v">${icons.check}</span><span class="fx">fx</span></div>
        <div class="input">学生成绩表 ${icons.fchev}</div>
      </div>
      <div class="main">
        ${this.renderSheet()}
        <div class="vbar">
          <div class="vbtn">${icons.triUp}</div>
          <div class="vthumb"></div>
          <div class="vtrack"></div>
          <div class="vbtn">${icons.triDown}</div>
        </div>
      </div>
      <div class="sheetbar">
        ${row(1, [
          [33, html`<span>${icons.triLeft('#c4c4c4')}</span>`],
          [65, html`<span>${icons.triRight('#c4c4c4')}</span>`],
          [154, html`<span class="tabcell">Sheet1</span>`],
          [243, icons.add],
          [928, icons.dots],
          [1231.500, html`<span class="hscroll">
            <span class="hb">${icons.triLeft('#222')}</span>
            <span class="hthumb"></span>
            <span class="htrack"></span>
            <span class="hb">${icons.triRight('#222')}</span>
          </span>`],
        ])}
      </div>
      <div class="status">
        ${row(1, [
          [15, '就绪', 'l'],
          [80, icons.a11y],
          [92, html`<span class="a11y">辅助功能: 调查</span>`, 'l'],
          [779, '平均值: 103.4327957', 'l'],
          [946, '计数: 138', 'l'],
          [1031, '求和: 9619.25', 'l'],
          [1175, html`<span class="viewon">${icons.viewNormal}</span>`],
          [1225, icons.viewPage],
          [1275, icons.viewBreak],
          [1312, '−'],
          [1385, html`<span class="slider"><i></i><b></b></span>`],
          [1460, '+'],
          [1497, '85%'],
        ])}
      </div>
    </div>`;
  }
}
